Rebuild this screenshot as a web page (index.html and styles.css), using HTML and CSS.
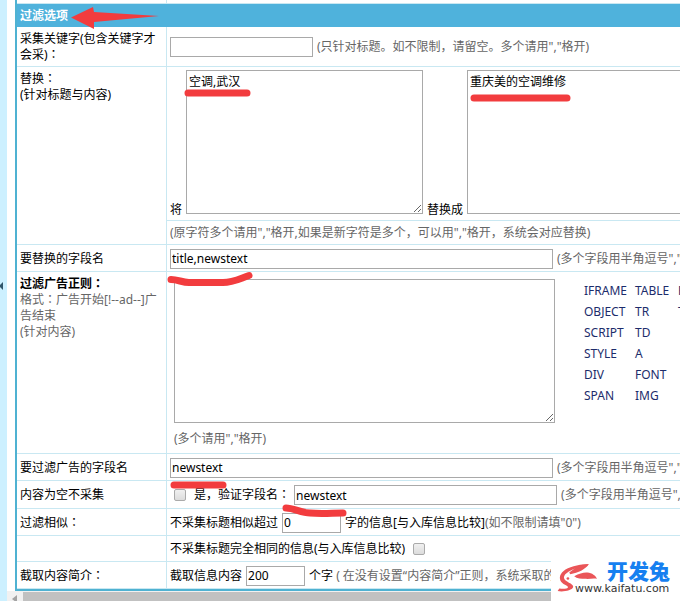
FILE: index.html
```html
<!DOCTYPE html>
<html lang="zh-CN">
<head>
<meta charset="utf-8">
<title>过滤选项</title>
<link rel="stylesheet" href="styles.css">
</head>
<body>
<div class="app">
  <div class="rail"><svg class="rail-arrow" viewBox="0 0 3 8"><path d="M3 0v8L-1 4z"/></svg></div>
  <main class="pane">
    <form class="panel">
      <table class="options">
        <colgroup><col class="col-label"><col></colgroup>
        <tbody>
        <tr class="spacer"><td></td><td></td></tr>
        <tr class="heading"><th colspan="2">过滤选项</th></tr>
        <tr class="r-keyword">
          <td><label for="keyword">采集关键字(包含关键字才会采)<span class="colon" lang="zh-TW">：</span></label></td>
          <td><div class="line"><input class="w-keyword" id="keyword" type="text"><span class="hint">(只针对标题。如不限制，请留空。多个请用","格开)</span></div></td>
        </tr>
        <tr class="r-replace">
          <td class="top" rowspan="2">替换<span class="colon" lang="zh-TW">：</span><br>(针对标题与内容)</td>
          <td class="top"><div class="line line-end"><label for="from">将</label><textarea class="replace-box" id="from">空调,武汉</textarea><label for="to">替换成</label><textarea class="replace-box" id="to">重庆美的空调维修</textarea></div></td>
        </tr>
        <tr class="r-note"><td><span class="hint">(原字符多个请用","格开,如果是新字符是多个，可以用","格开，系统会对应替换)</span></td></tr>
        <tr class="r-field">
          <td><label for="field">要替换的字段名</label></td>
          <td><div class="line"><input class="w-field" id="field" type="text" value="title,newstext"><span class="hint">(多个字段用半角逗号","格开)</span></div></td>
        </tr>
        <tr class="r-regex">
          <td class="top"><label for="regex"><strong>过滤广告正则<span class="colon" lang="zh-TW">：</span></strong><br><span class="hint">格式<span class="colon" lang="zh-TW">：</span>广告开始[!--ad--]广告结束<br>(针对内容)</span></label></td>
          <td class="top">
            <div class="regex">
              <div>
                <textarea class="regex-box" id="regex"></textarea>
                <p class="hint regex-note">(多个请用","格开)</p>
              </div>
              <div class="tags">
                <a href="#">IFRAME</a><a href="#">TABLE</a><a href="#">P</a>
                <a href="#">OBJECT</a><a href="#">TR</a><a href="#">T</a>
                <a href="#">SCRIPT</a><a href="#">TD</a><span></span>
                <a href="#">STYLE</a><a href="#">A</a><span></span>
                <a href="#">DIV</a><a href="#">FONT</a><span></span>
                <a href="#">SPAN</a><a href="#">IMG</a><span></span>
              </div>
            </div>
          </td>
        </tr>
        <tr class="r-field">
          <td><label for="adfield">要过滤广告的字段名</label></td>
          <td><div class="line"><input class="w-field" id="adfield" type="text" value="newstext"><span class="hint">(多个字段用半角逗号","格开)</span></div></td>
        </tr>
        <tr class="r-empty">
          <td>内容为空不采集</td>
          <td><div class="line"><input class="indent" id="skip" type="checkbox"><label class="skip-label" for="skip">是，验证字段名<span class="colon" lang="zh-TW">：</span></label><input class="w-verify" type="text" aria-label="验证字段名" value="newstext"><span class="hint">(多个字段用半角逗号","格开)</span></div></td>
        </tr>
        <tr class="r-field">
          <td>过滤相似<span class="colon" lang="zh-TW">：</span></td>
          <td><div class="line"><label for="similar">不采集标题相似超过</label><input class="w-number" id="similar" type="text" value="0"><span>字的信息[与入库信息比较]<span class="hint">(如不限制请填"0")</span></span></div></td>
        </tr>
        <tr class="r-same">
          <td></td>
          <td><div class="line"><label for="same">不采集标题完全相同的信息(与入库信息比较)</label><input class="check-end" id="same" type="checkbox"></div></td>
        </tr>
        <tr class="r-field">
          <td>截取内容简介<span class="colon" lang="zh-TW">：</span></td>
          <td><div class="line"><label for="brief">截取信息内容</label><input class="w-number" id="brief" type="text" value="200"><span>个字<span class="hint"> ( 在没有设置“内容简介”正则，系统采取的</span></span></div></td>
        </tr>
        </tbody>
      </table>
    </form>
    <div class="scrollbar"><svg class="scroll-arrow" viewBox="0 0 16 10"><path d="M10 4v8L5 8z"/></svg><div class="thumb"></div></div>
  </main>
  <svg class="marks" viewBox="0 0 680 601" width="680" height="601" aria-hidden="true">
    <path class="fill" d="M71 17.500L93 7l1 5 65 4-65 6v7z"/>
    <path class="stroke" d="M188 93h59M474 98h93M174 485h49"/>
    <path class="stroke" d="M171 279.500c7 0 11 3 18 3h34c10 0 17-4 26-7M286 508c8 0 15 5 24 5 12 1 22 0 33 0"/>
  </svg>
  <div class="brand">
    <svg class="rabbit" viewBox="20 20 130 95">
      <path d="M22 107C38 110 66 106 69 95 71 84 42 80 41 67 40 54 64 42 86 36 80 42 70 47 57 51L60 56C85 52 105 42 116 26 90 24 55 34 40 46 25 58 26 74 37 83 44 89 55 91 53 96 49 101 38 101 27 99z"/>
      <path d="M57 51C80 48 102 40 116 26 104 25 92 28 82 32z"/>
      <path d="M72 62C88 54 100 50 112 51 126 52 137 61 141 70 130 67 120 71 106 70 94 70 80 69 72 62z"/>
      <circle cx="53" cy="69" r="4"/>
    </svg>
    <div class="brand-name">开发兔</div>
    <div class="brand-url">www.kaifatu.com</div>
  </div>
</div>
</body>
</html>
```
FILE: styles.css
```css
* { box-sizing: border-box; }

body {
  margin: 0;
  overflow: hidden;
  color: #000;
  font: 12px/16px "Noto Sans", "Noto Sans CJK SC", sans-serif;
}

.app {
  position: relative;
  display: flex;
  min-height: 100vh;
}

.rail {
  display: flex;
  align-items: center;
  flex: 0 0 7px;
  background: #ccf0ff;
}

.rail-arrow {
  width: 3px;
  height: 8px;
  margin-bottom: 30px;
  fill: #31566b;
}

.pane {
  display: flex;
  flex: 1;
  flex-direction: column;
  min-width: 0;
}

.panel {
  margin-left: 8px;
  overflow: hidden;
  border-left: 2px solid #4fb2d2;
  border-bottom: 2px solid #4fb2d2;
}

.options {
  width: 100%;
  min-width: 900px;
  table-layout: fixed;
  border-collapse: separate;
  border-spacing: 0;
}

.col-label { width: 150px; }

.options td {
  padding: 1px 3px 0;
  border-bottom: 1px solid #c9e8f2;
  vertical-align: middle;
}

.options td:first-child:not(:last-child) { border-right: 1px solid #c9e8f2; }
.options .top { padding-top: 3px; vertical-align: top; }
.options .top:first-child { padding-top: 4px; }

.options .spacer td { padding: 0; }

.heading th {
  height: 23px;
  padding: 1px 3px 0;
  background: #4fb2dc;
  color: #fff;
  text-align: left;
}

.spacer { height: 4px; }
.r-keyword { height: 40px; }
.r-replace { height: 154px; }
.r-note { height: 24px; }
.r-field { height: 27px; }
.r-regex { height: 182px; }
.r-empty { height: 28px; }
.r-same { height: 26px; }

.hint { color: #666; }
.colon { font-family: "Noto Sans", "Noto Sans CJK TC", sans-serif; }

.line {
  display: flex;
  align-items: center;
  gap: 4px;
  white-space: nowrap;
}

.line-end { align-items: flex-end; }
.line-end label { line-height: 8px; }

input[type="text"],
textarea {
  flex: none;
  margin: 0;
  border: 1px solid #a9a9a9;
  border-radius: 0;
  background: #fff;
  color: #000;
  font: inherit;
}

input[type="text"] {
  height: 20px;
  padding: 0 1px;
}

textarea {
  display: block;
  height: 144px;
  padding: 3px 2px;
}

input[type="checkbox"] {
  flex: none;
  width: 12px;
  height: 12px;
  margin: 0;
  appearance: none;
  border: 1px solid #aaa;
  border-radius: 2px;
  background: linear-gradient(#f0f0f0, #dcdcdc);
}

.w-keyword { width: 143px; }
.w-field { width: 383px; }
.w-verify { width: 263px; }
.w-number { width: 59px; }
.replace-box { width: 237px; }
.regex-box { width: 381px; }
.line .indent { margin-left: 4px; }
.skip-label { margin-left: 4px; }
.line .check-end { margin-left: 4px; }

.regex {
  display: flex;
  gap: 29px;
  padding: 4px 4px 0;
}

.regex-note { margin: 8px 0 0; }

.tags {
  display: grid;
  grid-template-columns: 51px 43px 40px;
  grid-auto-rows: 21px;
  align-content: start;
  line-height: 24px;
}

.tags a {
  color: #1c2c6b;
  text-decoration: none;
}

.scrollbar {
  display: flex;
  flex: 1;
  min-height: 10px;
  max-height: 17px;
  background: #f1f1f1;
}

.scroll-arrow {
  flex: none;
  width: 16px;
  height: 10px;
  fill: #a3a3a3;
}

.thumb {
  flex: 1;
  margin-top: 1px;
  background: #c1c1c1;
}

.marks {
  position: absolute;
  top: 0;
  left: 0;
  pointer-events: none;
}

.marks .fill { fill: #f23c3e; }

.marks .stroke {
  fill: none;
  stroke: #f23c3e;
  stroke-width: 7px;
  stroke-linecap: round;
  stroke-linejoin: round;
}

.brand {
  position: absolute;
  right: 0;
  bottom: 0;
  display: grid;
  grid-template-columns: 56px 73px;
  grid-template-rows: 27px 18px;
  background: #fff;
}

.rabbit {
  grid-area: 1 / 1 / 3 / 2;
  width: 43px;
  height: 32px;
  margin: 6px 0 0 6px;
  fill: #ea5558;
}

.brand-name {
  grid-area: 1 / 2;
  color: #1680f0;
  font: 900 21px/28px "Noto Sans CJK SC", sans-serif;
}

.brand-url {
  grid-area: 2 / 1 / 3 / 3;
  padding-left: 24px;
  color: #333;
  font: 11px/12px "DejaVu Sans", sans-serif;
}
```
